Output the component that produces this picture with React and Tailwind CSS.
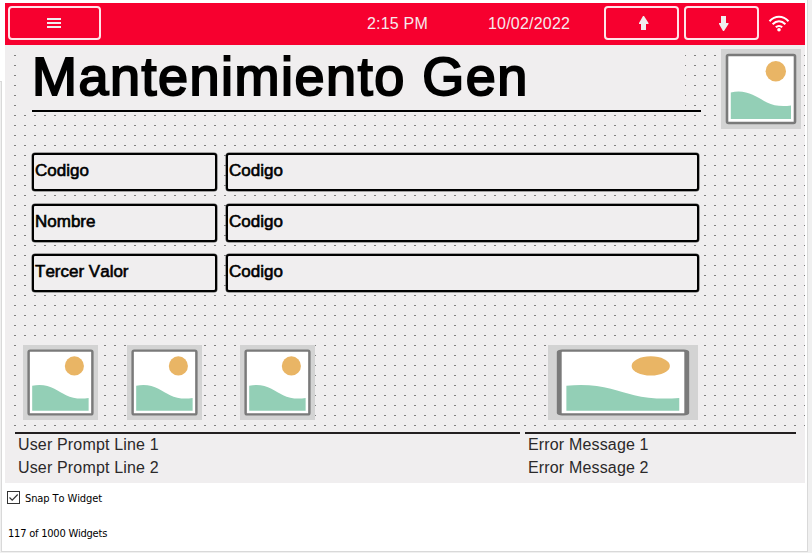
function Placeholder({ className }) {
  return (
    <div className={`bg-[#d3d3d3] shrink-0 ${className}`}>
      <svg viewBox="0 0 80 80" preserveAspectRatio="none" className="block w-full h-full">
        <rect x="6" y="6" width="68" height="68" rx="1.5" fill="#fff" stroke="#7a7a7a" strokeWidth="2.6" />
        <path d="M9.800 43.500C26 39.500 37 49 46 53.500Q56 58.500 70 56.500V70H9.800Z" fill="#93cfb6" />
        <circle cx="54.8" cy="22.300" r="10.2" fill="#e9b565" />
      </svg>
    </div>
  );
}

function Field({ label, value }) {
  const box =
    "h-[38px] rounded-[3px] border-2 border-black bg-[#f0eeef] pl-[1px] pb-[3px] flex items-center text-[17px] leading-none text-black [-webkit-text-stroke:0.6px_black] shadow-[0_0_0_0.5px_#555]";
  return (
    <div className="flex gap-[9px]">
      <div className={`${box} w-[185px]`}>{label}</div>
      <div className={`${box} w-[473px]`}>{value}</div>
    </div>
  );
}

function HeaderButton({ className, children }) {
  return (
    <div className={`h-[34px] rounded-[4px] border-2 border-[#ffe3e8] flex items-center justify-center ${className}`}>
      {children}
    </div>
  );
}

function Header() {
  return (
    <header className="h-[42px] w-[800px] bg-[#f7002f] flex items-start pt-[3px] pl-[3px] text-[#f6e9ec] text-[16px]">
      <HeaderButton className="w-[93px]">
        <svg width="14" height="10" viewBox="0 0 14 10" fill="#f0eeef" shapeRendering="crispEdges" className="mr-[1px]">
          <path d="M0 0h14v2H0zM0 4h14v2H0zM0 8h14v2H0z" />
        </svg>
      </HeaderButton>
      <div className="ml-[266px] w-[121px] h-[36px] flex items-center tracking-[0.2px]">2:15 PM</div>
      <div className="w-[116px] h-[36px] flex items-center whitespace-nowrap tracking-[0.2px]">10/02/2022</div>
      <HeaderButton className="w-[75px]">
        <svg width="10" height="14" viewBox="0 0 10 14" fill="#f0eeef" className="mr-[-4px]">
          <path d="M4 0h1l4.500 7v1h-2.500v6h-5v-6h-2v-1z" />
        </svg>
      </HeaderButton>
      <HeaderButton className="w-[75px] ml-[5px]">
        <svg width="10" height="15" viewBox="0 0 10 15" fill="#f0eeef" className="mr-[-4px]">
          <path d="M2 0h5v7h2.500v1l-4.500 7h-1l-4-7v-1h2z" />
        </svg>
      </HeaderButton>
      <svg width="22" height="17" viewBox="0 0 22 17" fill="none" stroke="#fff" strokeWidth="2" className="ml-[9px] mt-[9px]">
        <path d="M1.500 6.300C7 0.300 15 0.300 20.500 6.300M4.600 9.300C8.500 5.200 13.500 5.200 17.400 9.300M7.800 12.300C9.700 10.400 12.300 10.400 14.200 12.300" />
        <circle cx="11" cy="14.700" r="1.800" fill="#fff" stroke="none" />
      </svg>
    </header>
  );
}

function Messages({ lines, className }) {
  return (
    <div className={`border-t-2 border-[#231f20] pl-[3px] text-[16px] leading-[23px] tracking-[0.16px] text-[#2b292a] whitespace-nowrap ${className}`}>
      <div className="-mt-px">
        {lines.map((l) => (
          <div key={l}>{l}</div>
        ))}
      </div>
    </div>
  );
}

export default function App() {
  return (
    <div className="w-[812px] h-[553px] bg-[#f0f0f0] overflow-hidden font-['Liberation_Sans',Arial,sans-serif] [font-kerning:none]">
      <div className="w-[808px] h-[552px] bg-white border-r border-b border-[#d9d9d9] flex">
        <div className="w-[2px] shrink-0 pt-[81px]">
          <div className="h-[471px] bg-[#f0f0f0] border-r border-t border-[#d9d9d9]" />
        </div>
        <div className="pt-[3px] pl-[3px]">
          <Header />
          <main className="w-[800px] h-[438px] bg-[#f0eeef] flex flex-col relative">
            <svg className="absolute left-0 top-0" width="800" height="386" shapeRendering="crispEdges">
              <defs>
                <pattern id="grid" width="10" height="10" patternUnits="userSpaceOnUse">
                  <rect x="9" y="0" width="1" height="1" fill="#808080" />
                  <rect x="0" y="0" width="1" height="1" fill="#808080" />
                </pattern>
              </defs>
              <rect x="9" y="10" width="791" height="376" fill="url(#grid)" />
            </svg>
            <div className="relative flex h-[84px]">
              <div className="ml-[19px] w-[661px] h-[65px] bg-[#f0eeef] pl-[8px] text-[54px] leading-[62px] tracking-[1.5px] text-black whitespace-nowrap [-webkit-text-stroke:2px_black]">
                Mantenimiento Gen
              </div>
              <Placeholder className="w-[80px] h-[80px] ml-[36px] mt-[4px]" />
            </div>
            <div className="relative w-[669px] h-[2px] bg-black ml-[27px] mt-[-19px]" />
            <div className="relative ml-[27px] mt-[41px] flex flex-col">
              <Field label="Codigo" value="Codigo" />
              <div className="h-[13px]" />
              <Field label="Nombre" value="Codigo" />
              <div className="h-[12px]" />
              <Field label="Tercer Valor" value="Codigo" />
            </div>
            <div className="relative flex ml-[18px] mt-[53px]">
              <Placeholder className="w-[75px] h-[75px]" />
              <Placeholder className="w-[75px] h-[75px] ml-[29px]" />
              <Placeholder className="w-[75px] h-[75px] ml-[38px]" />
              <Placeholder className="w-[150px] h-[75px] ml-[233px]" />
            </div>
            <div className="relative flex ml-[10px] mt-[12px]">
              <Messages className="w-[505px]" lines={["User Prompt Line 1", "User Prompt Line 2"]} />
              <Messages className="w-[271px] ml-[5px]" lines={["Error Message 1", "Error Message 2"]} />
            </div>
          </main>
          <div className="flex items-center ml-[2px] mt-[8px] h-[13px] text-[11px] text-black font-['DejaVu_Sans_Condensed','DejaVu_Sans',sans-serif]">
            <svg width="13" height="13" viewBox="0 0 13 13" fill="none">
              <rect x="0.500" y="0.500" width="12" height="12" fill="#fff" stroke="#333" />
              <path d="M2.500 6.500l2.700 2.700L10.700 3.500" stroke="#333" strokeWidth="1.200" />
            </svg>
            <span className="ml-[5px] mt-[3px] tracking-[-0.1px]">Snap To Widget</span>
          </div>
          <div className="ml-[3px] mt-[23px] text-[11px] leading-[13px] tracking-[-0.22px] text-black font-['DejaVu_Sans_Condensed','DejaVu_Sans',sans-serif]">
            117 of 1000 Widgets
          </div>
        </div>
      </div>
    </div>
  );
}
